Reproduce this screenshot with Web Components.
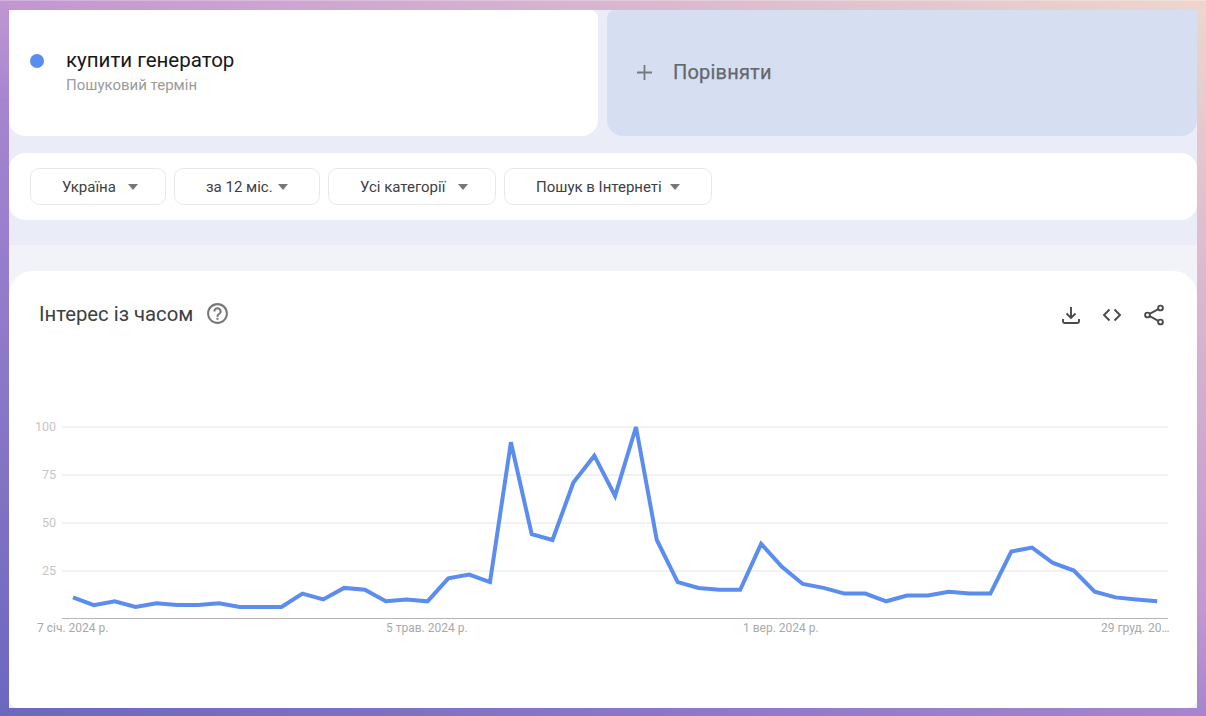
<!DOCTYPE html>
<html lang="uk">
<head>
<meta charset="utf-8">
<title>Інтерес із часом</title>
<style>
  html, body { margin: 0; height: 100%; }
  body {
    width: 1206px;
    height: 716px;
    overflow: hidden;
    box-sizing: border-box;
    padding: 10px 9px 8px 9px;
    background: linear-gradient(27deg, #6b67bf, #a585cf 46%, #c297d2 54%, #efd6cd);
    box-shadow: inset 0 1px rgba(255,255,255,.25);
    font-family: Roboto, "Noto Sans", sans-serif;
  }
</style>
</head>
<body>
<trends-page>
  <term-card slot="term" label="купити генератор" sub="Пошуковий термін"></term-card>
  <compare-card slot="compare" label="Порівняти"></compare-card>
  <filter-bar slot="filters">
    <filter-chip style="width:136px;--gap:12px">Україна</filter-chip>
    <filter-chip style="width:146px;--gap:5px">за 12 міс.</filter-chip>
    <filter-chip style="width:168px;--gap:13px">Усі категорії</filter-chip>
    <filter-chip style="width:208px;--gap:8px">Пошук в Інтернеті</filter-chip>
  </filter-bar>
  <interest-chart slot="chart" heading="Інтерес із часом"></interest-chart>
</trends-page>

<script>
  // Page frame: top cards, filters, then the paler band with the chart
  class TrendsPage extends HTMLElement {
    constructor() {
      super();
      this.attachShadow({ mode: 'open' });
      this.shadowRoot.innerHTML = `
        <style>
          :host { display: flex; flex-direction: column; height: 698px; background: #eaedf7; }
          .top { display: grid; grid-template-columns: 589px 590px; column-gap: 9px; height: 126px; }
          .filters { margin-top: 17px; }
          .lower { margin-top: 25px; flex: 1; display: flex; flex-direction: column; padding-top: 26px; background: #f1f3f8; }
        </style>
        <div class="top"><slot name="term"></slot><slot name="compare"></slot></div>
        <div class="filters"><slot name="filters"></slot></div>
        <div class="lower"><slot name="chart"></slot></div>
      `;
    }
  }

  class TermCard extends HTMLElement {
    constructor() {
      super();
      this.attachShadow({ mode: 'open' });
      this.shadowRoot.innerHTML = `
        <style>
          :host { display: flex; align-items: flex-start; background: #fff; border-radius: 0 8px 16px 16px; padding: 38px 0 0 21px; box-sizing: border-box; }
          .dot { width: 14px; height: 14px; border-radius: 50%; background: #5b8def; margin: 6px 22px 0 0; flex: none; }
          .label { font-size: 20.500px; line-height: 24px; color: #17171a; }
          .sub { font-size: 15px; line-height: 18px; margin-top: 4px; color: #9a9a9a; }
        </style>
        <span class="dot"></span>
        <div>
          <div class="label">${this.getAttribute('label')}</div>
          <div class="sub">${this.getAttribute('sub')}</div>
        </div>
      `;
    }
  }

  class CompareCard extends HTMLElement {
    constructor() {
      super();
      this.attachShadow({ mode: 'open' });
      this.shadowRoot.innerHTML = `
        <style>
          :host { display: flex; align-items: center; background: #d6dff1; border-radius: 8px 0 16px 16px; padding: 0 0 2px 30px; box-sizing: border-box; }
          svg { width: 15px; height: 15px; margin-right: 21px; }
          span { font-size: 20px; font-weight: 400; color: #63676e; letter-spacing: .2px; -webkit-text-stroke: .25px #63676e; }
        </style>
        <svg viewBox="0 0 15 15"><path d="M7.500 0v15M0 7.500h15" stroke="#777a7d" stroke-width="1.800" fill="none"/></svg>
        <span>${this.getAttribute('label')}</span>
      `;
    }
  }

  class FilterBar extends HTMLElement {
    constructor() {
      super();
      this.attachShadow({ mode: 'open' });
      this.shadowRoot.innerHTML = `
        <style>
          :host { display: flex; gap: 8px; height: 67px; box-sizing: border-box; padding: 15px 21px 0; background: #fff; border-radius: 16px; }
        </style>
        <slot></slot>
      `;
    }
  }

  class FilterChip extends HTMLElement {
    constructor() {
      super();
      this.attachShadow({ mode: 'open' });
      this.shadowRoot.innerHTML = `
        <style>
          :host { display: flex; align-items: center; gap: var(--gap); height: 37px; box-sizing: border-box; padding-left: 31px; border: 1px solid #e6e8ec; border-radius: 9px; background: #fff; font-size: 15px; color: #3c4043; }
          i { width: 0; height: 0; border-left: 5.500px solid transparent; border-right: 5.500px solid transparent; border-top: 6px solid #777; }
        </style>
        <span><slot></slot></span><i></i>
      `;
    }
  }

  // Weekly search interest, 0..100
  const WEEKS = [11,7,9,6,8,7,7,8,6,6,6,13,10,16,15,9,10,9,21,23,19,92,44,41,71,85,64,100,41,19,16,15,15,39,27,18,16,13,13,9,12,12,14,13,13,35,37,29,25,14,11,10,9];

  class InterestChart extends HTMLElement {
    constructor() {
      super();
      this.attachShadow({ mode: 'open' });
      const points = WEEKS.map((v, i) => `${(73 + i * 20.85).toFixed(1)},${(618.5 - v * 1.915).toFixed(1)}`).join(' ');
      const grid = [[100, 427], [75, 475], [50, 523], [25, 571]].map(([v, y]) => `
        <line x1="62" x2="1168" y1="${y}" y2="${y}" stroke="#e4e4e6" stroke-width="1.200"/>
        <text x="56" y="${y + 4}" text-anchor="end" class="tick">${v}</text>`).join('');
      this.shadowRoot.innerHTML = `
        <style>
          :host { display: block; flex: 1; background: #fff; border-radius: 24px 24px 10px 10px; }
          header { display: flex; align-items: flex-start; height: 109px; box-sizing: border-box; padding: 28px 31px 0 30px; }
          h2 { margin: 0; font-size: 20.300px; line-height: 30px; font-weight: 400; color: #3c4043; }
          .help { width: 25px; height: 25px; margin: 2px 0 0 12px; fill: #777; }
          .tools { margin-left: auto; display: flex; gap: 17px; margin-top: 4px; }
          .tools svg { width: 24px; height: 24px; fill: none; stroke: #4a4a4a; stroke-width: 1.900; }
          .tools svg:last-child { margin-left: 1px; }
          .plot { display: block; width: 1188px; height: 280px; }
          .tick { font: 12.500px Roboto, sans-serif; fill: #c6c6c6; }
          .date { font: 12px Roboto, sans-serif; fill: #a9a9a9; }
        </style>
        <header>
          <h2>${this.getAttribute('heading')}</h2>
          <svg class="help" viewBox="0 0 24 24"><path d="M11 18h2v-2h-2v2zm1-16C6.480 2 2 6.480 2 12s4.480 10 10 10 10-4.480 10-10S17.520 2 12 2zm0 18c-4.410 0-8-3.590-8-8s3.590-8 8-8 8 3.590 8 8-3.590 8-8 8zm0-14c-2.210 0-4 1.790-4 4h2c0-1.100.900-2 2-2s2 .900 2 2c0 2-3 1.750-3 5h2c0-2.250 3-2.500 3-5 0-2.210-1.790-4-4-4z"/></svg>
          <div class="tools">
            <svg viewBox="0 0 24 24"><path d="M12 4v11M7.500 10.500 12 15l4.500-4.500M4 16v2.500c0 1 .8 1.500 1.500 1.500h13c.7 0 1.500-.5 1.500-1.500V16"/></svg>
            <svg viewBox="0 0 24 24"><path d="M9.500 6.500 4 12l5.500 5.500M14.500 6.500 20 12l-5.500 5.500"/></svg>
            <svg viewBox="0 0 24 24"><circle cx="18.500" cy="5" r="2.400"/><circle cx="5.500" cy="12" r="2.400"/><circle cx="18.500" cy="19" r="2.400"/><path d="M16.400 6.200 7.600 10.800M7.600 13.200l8.800 4.600"/></svg>
          </div>
        </header>
        <svg class="plot" viewBox="9 380 1188 280">
          ${grid}
          <line x1="62" x2="1168" y1="618.500" y2="618.500" stroke="#b5b5b5" stroke-width="1"/>
          <polyline points="${points}" fill="none" stroke="#5b8def" stroke-width="4" stroke-linejoin="miter"/>
          <text x="37" y="632" class="date">7 січ. 2024 р.</text>
          <text x="386" y="632" class="date">5 трав. 2024 р.</text>
          <text x="743" y="632" class="date">1 вер. 2024 р.</text>
          <text x="1101" y="632" class="date">29 груд. 20…</text>
        </svg>
      `;
    }
  }

  customElements.define('trends-page', TrendsPage);
  customElements.define('term-card', TermCard);
  customElements.define('compare-card', CompareCard);
  customElements.define('filter-bar', FilterBar);
  customElements.define('filter-chip', FilterChip);
  customElements.define('interest-chart', InterestChart);
</script>
</body>
</html>
